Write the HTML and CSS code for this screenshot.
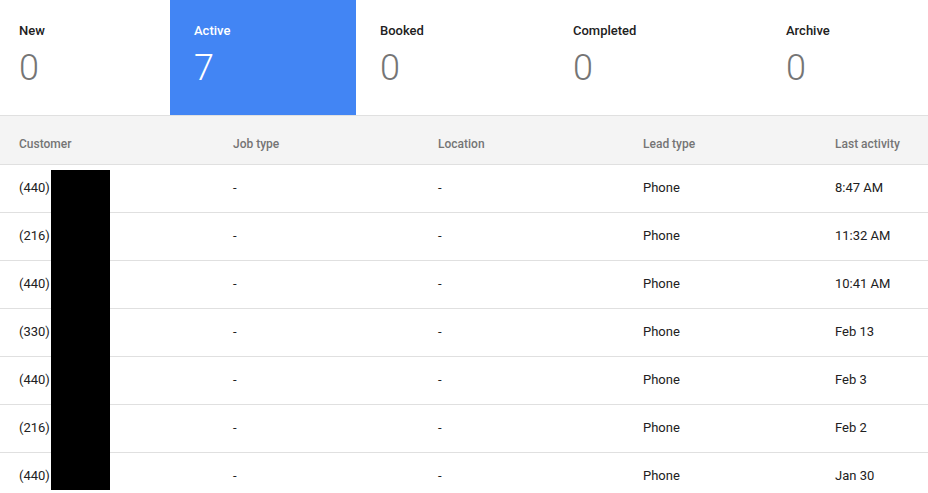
FILE: index.html
```html
<!DOCTYPE html>
<html>
<head>
	<link rel="stylesheet" href="styles.css">
</head>
<body>
	<div class="tabs">
		<div class="tab tab-new">
			<div class="tab-label">New</div>
			<div class="tab-count">0</div>
		</div>
		<div class="tab tab-active selected">
			<div class="tab-label">Active</div>
			<div class="tab-count">7</div>
		</div>
		<div class="tab tab-booked">
			<div class="tab-label">Booked</div>
			<div class="tab-count">0</div>
		</div>
		<div class="tab tab-completed">
			<div class="tab-label">Completed</div>
			<div class="tab-count">0</div>
		</div>
		<div class="tab tab-archive">
			<div class="tab-label">Archive</div>
			<div class="tab-count">0</div>
		</div>
	</div>

	<div class="leads">
		<div class="row head">
			<div class="col customer">Customer</div>
			<div class="col job">Job type</div>
			<div class="col location">Location</div>
			<div class="col lead">Lead type</div>
			<div class="col activity">Last activity</div>
		</div>
		<div class="row">
			<div class="col customer">(440)</div>
			<div class="col job">-</div>
			<div class="col location">-</div>
			<div class="col lead">Phone</div>
			<div class="col activity">8:47 AM</div>
		</div>
		<div class="row">
			<div class="col customer">(216)</div>
			<div class="col job">-</div>
			<div class="col location">-</div>
			<div class="col lead">Phone</div>
			<div class="col activity">11:32 AM</div>
		</div>
		<div class="row">
			<div class="col customer">(440)</div>
			<div class="col job">-</div>
			<div class="col location">-</div>
			<div class="col lead">Phone</div>
			<div class="col activity">10:41 AM</div>
		</div>
		<div class="row">
			<div class="col customer">(330)</div>
			<div class="col job">-</div>
			<div class="col location">-</div>
			<div class="col lead">Phone</div>
			<div class="col activity">Feb 13</div>
		</div>
		<div class="row">
			<div class="col customer">(440)</div>
			<div class="col job">-</div>
			<div class="col location">-</div>
			<div class="col lead">Phone</div>
			<div class="col activity">Feb 3</div>
		</div>
		<div class="row">
			<div class="col customer">(216)</div>
			<div class="col job">-</div>
			<div class="col location">-</div>
			<div class="col lead">Phone</div>
			<div class="col activity">Feb 2</div>
		</div>
		<div class="row">
			<div class="col customer">(440)</div>
			<div class="col job">-</div>
			<div class="col location">-</div>
			<div class="col lead">Phone</div>
			<div class="col activity">Jan 30</div>
		</div>
		<!-- redacted phone numbers -->
		<div class="redact"></div>
	</div>
</body>
</html>
```

FILE: styles.css
```css
html,body{
	margin: 0;
	padding: 0;
	background: #fff;
	font-family: Roboto, "Liberation Sans", sans-serif;
	color: #212121;
	overflow: hidden;
}
.tabs{
	display: flex;
	height: 115px;
}
.tab{
	box-sizing: border-box;
	padding: 23px 0 0 24px;
}
.tab-new{
	width: 170px;
	padding-left: 19px;
}
.tab-active{ width: 186px; }
.tab-booked{ width: 193px; }
.tab-completed{ width: 213px; }
.tab-archive{ flex: 1; }
.tab-label{
	font-size: 13px;
	font-weight: 500;
	line-height: 16px;
	color: #212121;
}
.tab-count{
	margin-top: 8px;
	font-size: 36px;
	font-weight: 300;
	line-height: 42px;
	color: #757575;
}
.selected{
	background: #4285f4;
}
.selected .tab-label,
.selected .tab-count{
	color: #fff;
}
.leads{
	position: relative;
	border-top: 1px solid #e0e0e0;
}
.row{
	box-sizing: border-box;
	display: flex;
	align-items: center;
	height: 48px;
	padding-bottom: 2px;
	border-bottom: 1px solid #e0e0e0;
	font-size: 13px;
}
.row.head{
	height: 49px;
	padding: 8px 0 0;
	background: #f4f4f4;
	font-size: 12px;
	font-weight: 500;
	color: #757575;
}
.col{
	box-sizing: border-box;
	padding-left: 19px;
}
.customer{ width: 214px; }
.job{ width: 205px; }
.location{ width: 205px; }
.lead{ width: 192px; }
.activity{ flex: 1; }
.redact{
	position: absolute;
	left: 51px;
	top: 54px;
	width: 59px;
	height: 320px;
	background: #000;
}
```
